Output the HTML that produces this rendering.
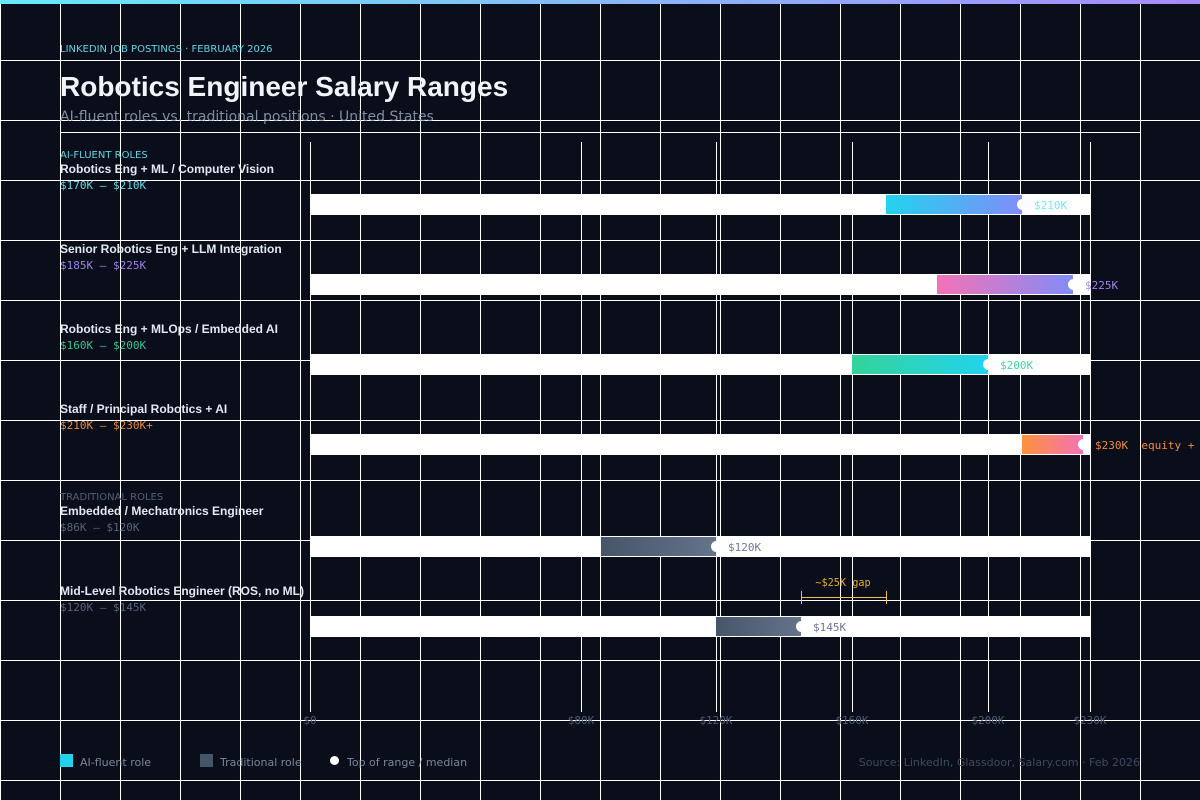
<!DOCTYPE html>
<html><head><meta charset="utf-8"><style>
*{margin:0;padding:0;box-sizing:border-box}
html,body{width:1200px;height:800px;overflow:hidden}
body{position:relative;background-color:#0a0e1a;background-image:linear-gradient(#fff 1px,transparent 1px),linear-gradient(90deg,#fff 1px,transparent 1px);background-size:60px 60px;font-family:"DejaVu Sans",sans-serif}
.a{position:absolute;white-space:pre}
.top{left:0;top:0;width:1200px;height:4px;background:linear-gradient(90deg,#67e8f9,#a78bfa)}
.eb{left:60px;top:44px;font-size:10px;line-height:12px;color:#67e8f9;opacity:.9}
h1{position:absolute;left:60px;top:70px;font:bold 28px/34px "Liberation Sans",sans-serif;color:#f1f5f9;white-space:nowrap}
.sub{left:60px;top:108px;font-size:14px;line-height:18px;color:#94a3b8;opacity:.85}
.sep{left:60px;top:132px;width:1080px;height:1px;background:#fff}
.sec{left:60px;font-size:10px;line-height:12px}
.nm{left:60px;font:bold 12px/14px "Liberation Sans",sans-serif;color:#e2e8f0}
.rg{left:60px;font:11px/14px "DejaVu Sans Mono",monospace;opacity:.92}
.ax{top:142px;width:1px;height:570px;background:#fff}
.tr{left:310px;width:780px;height:21px;background:#fff}
.f{height:19px}
.d{width:11px;height:11px;border-radius:50%;background:#fff}
.v{font:11px/14px "DejaVu Sans Mono",monospace;opacity:.95}
.t{top:714px;width:80px;text-align:center;font:11px/13px "DejaVu Sans Mono",monospace;color:#4d5b70}
.lg{top:756px;font-size:11px;line-height:14px;color:#94a3b8;opacity:.8}
</style></head><body>
<div class="a top"></div>
<div class="a eb">LINKEDIN JOB POSTINGS · FEBRUARY 2026</div>
<h1>Robotics Engineer Salary Ranges</h1>
<div class="a sub">AI-fluent roles vs. traditional positions · United States</div>
<div class="a sep"></div>

<div class="a ax" style="left:310px"></div>
<div class="a ax" style="left:581px"></div>
<div class="a ax" style="left:716px"></div>
<div class="a ax" style="left:852px"></div>
<div class="a ax" style="left:988px"></div>
<div class="a ax" style="left:1090px"></div>

<div class="a sec" style="top:150px;color:#67e8f9;opacity:.9">AI-FLUENT ROLES</div>
<div class="a nm" style="top:162px">Robotics Eng + ML / Computer Vision</div>
<div class="a rg" style="top:179px;color:#67e8f9">$170K — $210K</div>
<div class="a tr" style="top:194px"></div>
<div class="a f" style="left:886px;top:195px;width:136px;background:linear-gradient(90deg,#22d3ee,#818cf8)"></div>
<div class="a d" style="left:1017px;top:199px"></div>
<div class="a v" style="left:1034px;top:199px;color:#67e8f9">$210K</div>

<div class="a nm" style="top:242px">Senior Robotics Eng + LLM Integration</div>
<div class="a rg" style="top:259px;color:#a78bfa">$185K — $225K</div>
<div class="a tr" style="top:274px"></div>
<div class="a f" style="left:937px;top:275px;width:136px;background:linear-gradient(90deg,#f472b6,#818cf8)"></div>
<div class="a d" style="left:1068px;top:279px"></div>
<div class="a v" style="left:1085px;top:279px;color:#a78bfa">$225K</div>

<div class="a nm" style="top:322px">Robotics Eng + MLOps / Embedded AI</div>
<div class="a rg" style="top:339px;color:#34d399">$160K — $200K</div>
<div class="a tr" style="top:354px"></div>
<div class="a f" style="left:852px;top:355px;width:136px;background:linear-gradient(90deg,#34d399,#22d3ee)"></div>
<div class="a d" style="left:983px;top:359px"></div>
<div class="a v" style="left:1000px;top:359px;color:#34d399">$200K</div>

<div class="a nm" style="top:402px">Staff / Principal Robotics + AI</div>
<div class="a rg" style="top:419px;color:#fb923c">$210K — $230K+</div>
<div class="a tr" style="top:434px"></div>
<div class="a f" style="left:1022px;top:435px;width:61px;background:linear-gradient(90deg,#fb923c,#f472b6)"></div>
<div class="a d" style="left:1078px;top:439px"></div>
<div class="a v" style="left:1095px;top:439px;color:#fb923c">$230K  equity +</div>

<div class="a sec" style="top:492px;color:#516075">TRADITIONAL ROLES</div>
<div class="a nm" style="top:504px">Embedded / Mechatronics Engineer</div>
<div class="a rg" style="top:521px;color:#5b6a80">$86K — $120K</div>
<div class="a tr" style="top:536px"></div>
<div class="a f" style="left:601px;top:537px;width:115px;background:linear-gradient(90deg,#475569,#64748b)"></div>
<div class="a d" style="left:711px;top:541px"></div>
<div class="a v" style="left:728px;top:541px;color:#64748b">$120K</div>

<div class="a nm" style="top:584px">Mid-Level Robotics Engineer (ROS, no ML)</div>
<div class="a rg" style="top:601px;color:#5b6a80">$120K — $145K</div>
<div class="a tr" style="top:616px"></div>
<div class="a f" style="left:716px;top:617px;width:85px;background:linear-gradient(90deg,#475569,#64748b)"></div>
<div class="a d" style="left:796px;top:621px"></div>
<div class="a v" style="left:813px;top:621px;color:#64748b">$145K</div>

<div class="a" style="left:801px;top:597px;width:86px;height:1px;background:#f0c050"></div>
<div class="a" style="left:801px;top:591px;width:1px;height:13px;background:#f0c050"></div>
<div class="a" style="left:886px;top:591px;width:1px;height:13px;background:#f0c050"></div>
<div class="a" style="left:803px;top:578px;width:80px;text-align:center;font:10.2px/12px 'DejaVu Sans Mono',monospace;color:#fbbf24;opacity:.9">~$25K gap</div>

<div class="a t" style="left:270px">$0</div>
<div class="a t" style="left:541px">$80K</div>
<div class="a t" style="left:676px">$120K</div>
<div class="a t" style="left:812px">$160K</div>
<div class="a t" style="left:948px">$200K</div>
<div class="a t" style="left:1050px">$230K</div>

<div class="a" style="left:60px;top:754px;width:13px;height:13px;background:#22d3ee"></div>
<div class="a lg" style="left:80px">AI-fluent role</div>
<div class="a" style="left:200px;top:754px;width:13px;height:13px;background:#475569"></div>
<div class="a lg" style="left:220px">Traditional role</div>
<div class="a" style="left:330px;top:756px;width:9px;height:9px;border-radius:50%;background:#fff"></div>
<div class="a lg" style="left:347px">Top of range / median</div>
<div class="a" style="right:60px;top:756px;font-size:11px;line-height:14px;color:#3d4a5e">Source: LinkedIn, Glassdoor, Salary.com · Feb 2026</div>
</body></html>
